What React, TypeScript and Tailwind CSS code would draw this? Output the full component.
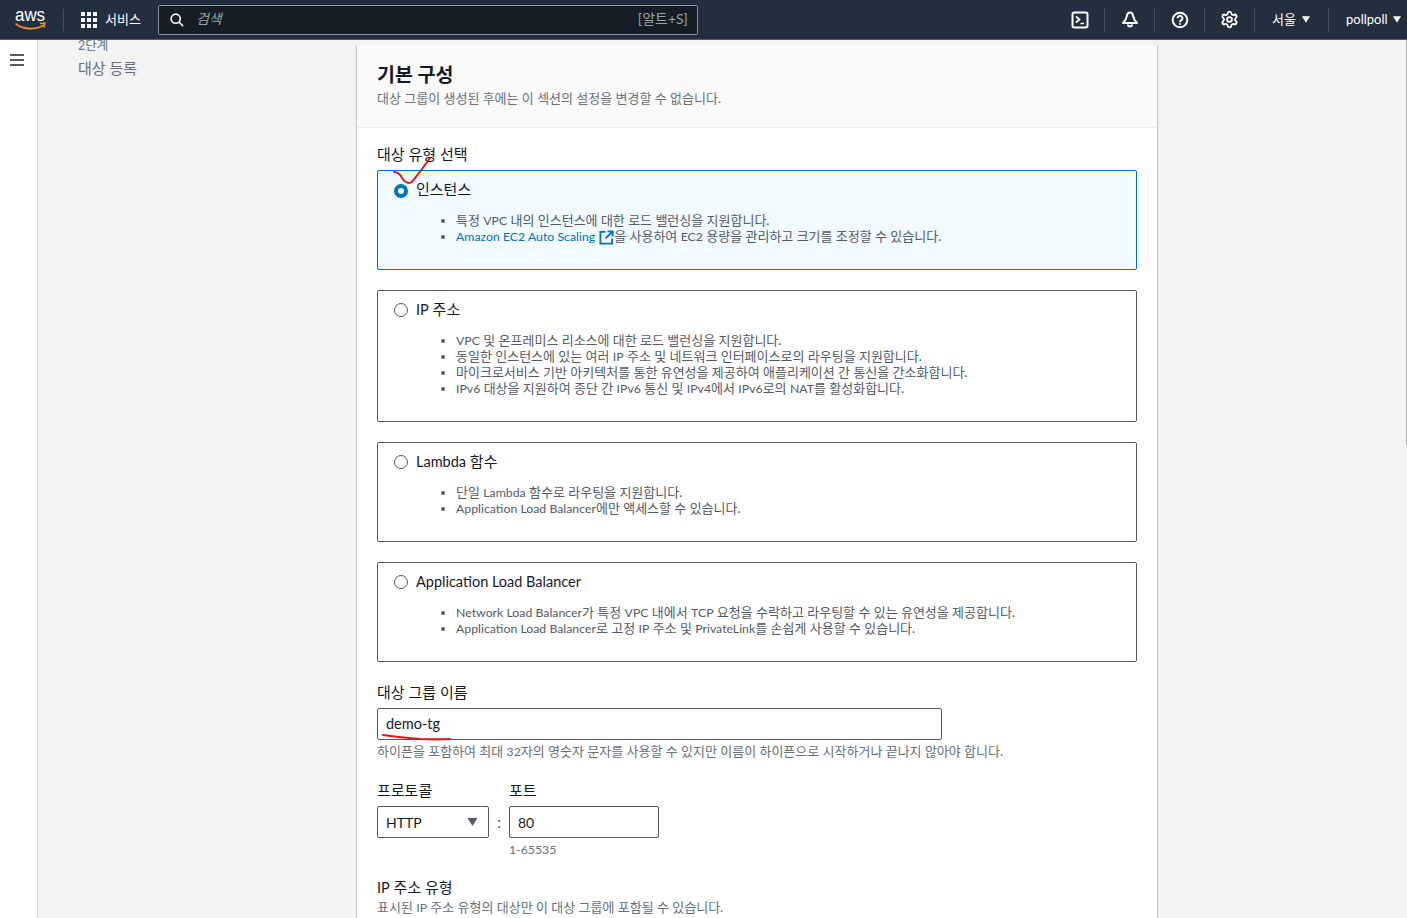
import React from 'react';
import { Settings } from 'lucide-react';

const Divider = () => <div className="w-px h-[24px] bg-[#414d5c]" />;

const Caret = ({ className }: { className: string }) => (
  <svg viewBox="0 0 10 8" className={className} fill="currentColor">
    <path d="M0 0h10L5 8z" />
  </svg>
);

const AwsLogo = () => (
  <svg viewBox="0 0 32 22" className="w-[32px] h-[22px] overflow-visible" fill="none">
    <text x="0" y="12" fill="#ffffff" fontSize="18" fontFamily="'Liberation Sans', sans-serif" textLength="30" lengthAdjust="spacingAndGlyphs">aws</text>
    <path d="M1 15c8 6 20 6 28 1" stroke="#ec912d" strokeWidth="1.600" strokeLinecap="round" />
    <path d="M25.500 14.500l4.500-.5-1 4.300" stroke="#ec912d" strokeWidth="1.400" strokeLinecap="round" />
  </svg>
);

const GridIcon = () => (
  <div className="grid grid-cols-3 gap-[2px] w-[16px]">
    {Array.from({ length: 9 }).map((_, i) => (
      <div key={i} className="w-[4px] h-[4px] bg-white" />
    ))}
  </div>
);

const NavIcon = ({ children }: { children: React.ReactNode }) => (
  <div className="w-[49px] flex items-center justify-center">
    <svg viewBox="0 0 16 16" className="w-[16px] h-[16px] overflow-visible" fill="none" stroke="#ffffff" strokeWidth="2">
      {children}
    </svg>
  </div>
);

// latin runs sit a little smaller than the hangul around them
const En = ({ children }: { children: React.ReactNode }) => <span className="text-[12.300px] leading-[0]">{children}</span>;
const EnTitle = ({ children }: { children: React.ReactNode }) => <span className="text-[14.500px] leading-[0]">{children}</span>;

const Header = () => (
  <header className="h-[40px] shrink-0 bg-[#232f3e] border-b border-[#545b64] flex items-center text-white relative z-10">
    <div className="ml-[15px] w-[32px]"><AwsLogo /></div>
    <div className="w-px h-[22px] bg-[#414d5c] ml-[16px]" />
    <div className="ml-[17px]"><GridIcon /></div>
    <span className="ml-[8px] text-[13px] leading-[16px] -mt-[2px]">서비스</span>
    <div className="ml-[17px] w-[540px] h-[30px] bg-[#161d26] border border-[#879596] rounded-[2px] flex items-center pl-[11px] pr-[9px]">
      <svg viewBox="0 0 16 16" className="w-[14px] h-[14px]" fill="none" stroke="#ffffff" strokeWidth="1.800">
        <circle cx="6.500" cy="6.500" r="5.200" />
        <path d="M10.500 10.500L15 15" />
      </svg>
      <span className="ml-[12px] text-[14px] italic text-[#95a5a6] -mt-[2px]">검색</span>
      <span className="ml-auto text-[14px] text-[#95a5a6] -mt-[2px]">[알트+S]</span>
    </div>
    <div className="ml-auto flex items-center">
      <NavIcon>
        <rect x="0.500" y="0.500" width="15" height="15" rx="2" />
        <path d="M4 4.500L7.500 7.500L4 10.500M8.500 11.500H12" strokeWidth="1.700" />
      </NavIcon>
      <Divider />
      <NavIcon>
        <path d="M8 0.500c-1.800 0-2.800 1.400-3 3-.4 3-1.500 5-4 7.500h14c-2.500-2.500-3.600-4.500-4-7.500-.2-1.600-1.200-3-3-3z" strokeLinejoin="round" />
        <path d="M6 12.500a2 2 0 0 0 4 0" />
      </NavIcon>
      <Divider />
      <NavIcon>
        <circle cx="8" cy="8" r="7.300" />
        <path d="M5.600 6.200a2.400 2.400 0 1 1 3.700 2c-.9.600-1.300 1-1.300 2M8 11.200v1.600" />
      </NavIcon>
      <Divider />
      <div className="w-[49px] flex items-center justify-center">
        <Settings size={19} strokeWidth={2.400} className="text-white" />
      </div>
      <Divider />
      <div className="w-[73px] flex items-center pl-[17px] gap-[6px]">
        <span className="text-[13px] leading-[16px] -mt-[2px]">서울</span>
        <Caret className="w-[8px] h-[7px] text-white" />
      </div>
      <Divider />
      <div className="w-[78px] flex items-center pl-[17px] gap-[5px]">
        <span className="text-[13px] leading-[16px] -mt-[2px]">pollpoll</span>
        <Caret className="w-[8px] h-[7px] text-white" />
      </div>
    </div>
  </header>
);

type RadioProps = {
  title: React.ReactNode;
  height: string;
  selected?: boolean;
  items: React.ReactNode[];
};

const RadioCard = ({ title, height, selected, items }: RadioProps) => (
  <div
    className={`${height} rounded-[2px] border px-[16px] pt-[10px] ${
      selected ? 'border-[#0073bb] bg-[#f1faff]' : 'border-[#545b64] bg-white'
    }`}
  >
    <div className="flex items-center h-[16px]">
      {selected ? (
        <div className="w-[14px] h-[14px] rounded-full border-[4px] border-[#0073bb] bg-white mt-[3px]" />
      ) : (
        <div className="w-[14px] h-[14px] rounded-full border border-[#545b64] bg-white mt-[2px]" />
      )}
      <span className="ml-[8px] text-[15px] mt-[1px] text-[#16191f]">{title}</span>
    </div>
    <ul className="list-disc mt-[15px] pl-[62px] text-[13px] leading-[16px] text-[#545b64]">
      {items.map((item, i) => (
        <li key={i}>{item}</li>
      ))}
    </ul>
  </div>
);

const Label = ({ children, className }: { children: React.ReactNode; className?: string }) => (
  <div className={`text-[15px] leading-[20px] text-[#16191f] ${className ?? ''}`}>{children}</div>
);

const Hint = ({ children, className }: { children: React.ReactNode; className?: string }) => (
  <div className={`text-[13px] leading-[16px] text-[#687078] ${className ?? ''}`}>{children}</div>
);

const App: React.FC = () => {
  return (
    <div
      className="w-[1407px] h-[918px] overflow-hidden flex flex-col bg-[#f2f3f3] relative"
      style={{ fontFamily: 'Lato, "Noto Sans CJK KR", sans-serif' }}
    >
      <Header />
      <div className="flex flex-1 min-h-0 overflow-hidden">
        {/* Side nav toggle */}
        <div className="w-[38px] shrink-0 bg-white border-r border-[#d5dbdb] pt-[14px] pl-[10px]">
          <svg viewBox="0 0 14 12" className="w-[14px] h-[12px]" fill="#545b64">
            <rect y="0" width="14" height="2" />
            <rect y="5" width="14" height="2" />
            <rect y="10" width="14" height="2" />
          </svg>
        </div>

        {/* Steps */}
        <div className="w-[319px] shrink-0 pl-[40px] -mt-[2px]">
          <div className="text-[12.500px] leading-[16px] text-[#687078]">2단계</div>
          <div className="mt-[4px] text-[15px] leading-[20px] text-[#687078]">대상 등록</div>
        </div>

        {/* Form card */}
        <div className="w-[800px] shrink-0 mt-[5px] relative">
          <div className="bg-white shadow-[0_1px_1px_0_rgba(0,28,36,0.3),1px_1px_1px_0_rgba(0,28,36,0.15),-1px_1px_1px_0_rgba(0,28,36,0.15)]">
            <div className="h-[83px] bg-[#fafafa] border-b border-[#eaeded] px-[20px] pt-[18px]">
              <h2 className="text-[19.500px] leading-[24px] font-bold text-[#16191f]">기본 구성</h2>
              <Hint className="mt-[3px]">대상 그룹이 생성된 후에는 이 섹션의 설정을 변경할 수 없습니다.</Hint>
            </div>
            <div className="px-[20px] pt-[16px] pb-[40px]">
              <Label>대상 유형 선택</Label>
              <div className="mt-[6px] flex flex-col gap-[20px] w-[760px]">
                <RadioCard
                  selected
                  title="인스턴스"
                  height="h-[100px]"
                  items={[
                    <>특정 <En>VPC</En> 내의 인스턴스에 대한 로드 밸런싱을 지원합니다.</>,
                    <>
                      <span className="text-[#0073bb]"><En>Amazon EC2 Auto Scaling</En></span>
                      <svg viewBox="0 0 16 16" className="inline w-[15px] h-[15px] ml-[4px] -my-[2px] align-[-2px]" fill="none" stroke="#0073bb" strokeWidth="2">
                        <path d="M7 2H1.500v12.500H14V9" />
                        <path d="M9 1.500h5.500V7M14.500 1.500L7 9" />
                      </svg>
                      을 사용하여 <En>EC2</En> 용량을 관리하고 크기를 조정할 수 있습니다.
                    </>,
                  ]}
                />
                <RadioCard
                  title={<><EnTitle>IP</EnTitle> 주소</>}
                  height="h-[132px]"
                  items={[
                    <><En>VPC</En> 및 온프레미스 리소스에 대한 로드 밸런싱을 지원합니다.</>,
                    <>동일한 인스턴스에 있는 여러 <En>IP</En> 주소 및 네트워크 인터페이스로의 라우팅을 지원합니다.</>,
                    '마이크로서비스 기반 아키텍처를 통한 유연성을 제공하여 애플리케이션 간 통신을 간소화합니다.',
                    <><En>IPv6</En> 대상을 지원하여 종단 간 <En>IPv6</En> 통신 및 <En>IPv4</En>에서 <En>IPv6</En>로의 <En>NAT</En>를 활성화합니다.</>,
                  ]}
                />
                <RadioCard
                  title={<><EnTitle>Lambda</EnTitle> 함수</>}
                  height="h-[100px]"
                  items={[
                    <>단일 <En>Lambda</En> 함수로 라우팅을 지원합니다.</>,
                    <><En>Application Load Balancer</En>에만 액세스할 수 있습니다.</>,
                  ]}
                />
                <RadioCard
                  title={<EnTitle>Application Load Balancer</EnTitle>}
                  height="h-[100px]"
                  items={[
                    <><En>Network Load Balancer</En>가 특정 <En>VPC</En> 내에서 <En>TCP</En> 요청을 수락하고 라우팅할 수 있는 유연성을 제공합니다.</>,
                    <><En>Application Load Balancer</En>로 고정 <En>IP</En> 주소 및 <En>PrivateLink</En>를 손쉽게 사용할 수 있습니다.</>,
                  ]}
                />
              </div>

              <Label className="mt-[20px]">대상 그룹 이름</Label>
              <div className="mt-[6px] w-[565px] h-[32px] border border-[#545b64] rounded-[2px] flex items-center px-[8px] text-[14.500px] text-[#16191f]">
                demo-tg
              </div>
              <Hint className="mt-[3px]">하이픈을 포함하여 최대 <En>32</En>자의 영숫자 문자를 사용할 수 있지만 이름이 하이픈으로 시작하거나 끝나지 않아야 합니다.</Hint>

              <div className="mt-[21px] flex items-start">
                <div className="w-[112px]">
                  <Label>프로토콜</Label>
                  <div className="mt-[6px] h-[32px] border border-[#545b64] rounded-[2px] flex items-center justify-between pl-[8px] pr-[10px] text-[14px] text-[#16191f]">
                    HTTP
                    <Caret className="w-[11px] h-[8px] text-[#545b64]" />
                  </div>
                </div>
                <div className="w-[20px] mt-[26px] h-[32px] flex items-center justify-center text-[15px] text-[#545b64]">:</div>
                <div className="w-[150px]">
                  <Label>포트</Label>
                  <div className="mt-[6px] h-[32px] border border-[#545b64] rounded-[2px] flex items-center px-[8px] text-[14px] text-[#16191f]">
                    80
                  </div>
                  <Hint className="mt-[3px]"><En>1-65535</En></Hint>
                </div>
              </div>

              <Label className="mt-[20px]"><EnTitle>IP</EnTitle> 주소 유형</Label>
              <Hint className="mt-[2px]">표시된 <En>IP</En> 주소 유형의 대상만 이 대상 그룹에 포함될 수 있습니다.</Hint>
            </div>
          </div>

          {/* red pen marks on the screenshot */}
          <svg viewBox="0 0 800 873" className="absolute left-0 top-0 w-[800px] h-[873px] pointer-events-none" fill="none">
            <path d="M37 127c4 0 6 2 8 6 2 3 4 5 7 5 3 0 4-2 6-5 5-6 10-13 15-20" stroke="#e8121b" strokeWidth="2" strokeLinecap="round" />
            <path d="M26 690c12 2 24 3 37 4 10 .5 20 .5 30 0" stroke="#e8121b" strokeWidth="2" strokeLinecap="round" />
          </svg>
        </div>
      </div>

      {/* page scrollbar sliver */}
      <div className="absolute right-0 top-[40px] w-px h-[405px] bg-[#b5b5b5]" />
    </div>
  );
};

export default App;
